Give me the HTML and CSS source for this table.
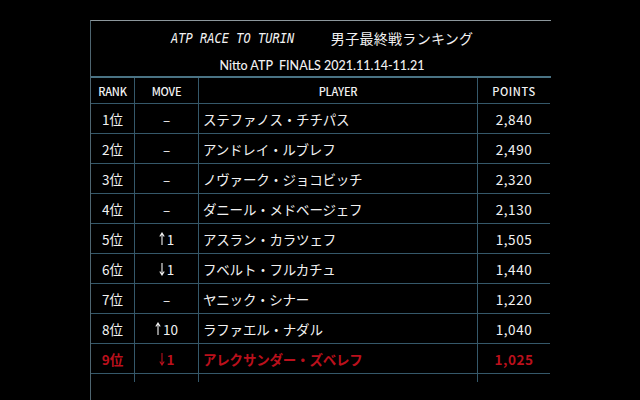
FILE: index.html
```html
<!DOCTYPE html>
<html lang="ja">
<head>
<meta charset="utf-8">
<link rel="stylesheet" href="styles.css">
</head>
<body>
<div class="board">
  <div class="title">
    <span class="title-en">ATP RACE TO TURIN</span>
    <span class="title-ja">男子最終戦ランキング</span>
  </div>
  <div class="subtitle">Nitto ATP&nbsp; FINALS 2021.11.14-11.21</div>
  <div class="table">
    <div class="cell head">RANK</div>
    <div class="cell head">MOVE</div>
    <div class="cell head">PLAYER</div>
    <div class="cell head last">POINTS</div>

    <div class="cell">1位</div><div class="cell">–</div><div class="cell name">ステファノス・チチパス</div><div class="cell last">2,840</div>
    <div class="cell">2位</div><div class="cell">–</div><div class="cell name">アンドレイ・ルブレフ</div><div class="cell last">2,490</div>
    <div class="cell">3位</div><div class="cell">–</div><div class="cell name">ノヴァーク・ジョコビッチ</div><div class="cell last">2,320</div>
    <div class="cell">4位</div><div class="cell">–</div><div class="cell name">ダニール・メドベージェフ</div><div class="cell last">2,130</div>
    <div class="cell">5位</div><div class="cell"><svg class="arrow" viewBox="0 0 6 14"><path d="M3 1V13M0.8 4.5L3 1L5.2 4.5"/></svg>1</div><div class="cell name">アスラン・カラツェフ</div><div class="cell last">1,505</div>
    <div class="cell">6位</div><div class="cell"><svg class="arrow" viewBox="0 0 6 14"><path d="M3 1V13M0.8 9.5L3 13L5.2 9.5"/></svg>1</div><div class="cell name">フベルト・フルカチュ</div><div class="cell last">1,440</div>
    <div class="cell">7位</div><div class="cell">–</div><div class="cell name">ヤニック・シナー</div><div class="cell last">1,220</div>
    <div class="cell">8位</div><div class="cell"><svg class="arrow" viewBox="0 0 6 14"><path d="M3 1V13M0.8 4.5L3 1L5.2 4.5"/></svg>10</div><div class="cell name">ラファエル・ナダル</div><div class="cell last">1,040</div>
    <div class="cell red">9位</div><div class="cell red"><svg class="arrow" viewBox="0 0 6 14"><path d="M3 1V13M0.8 9.5L3 13L5.2 9.5"/></svg>1</div><div class="cell name red">アレクサンダー・ズベレフ</div><div class="cell last red">1,025</div>

    <div class="cell tail"></div><div class="cell tail"></div><div class="cell tail"></div><div class="cell tail last"></div>
  </div>
</div>
</body>
</html>
```

FILE: styles.css
```css
html, body {
  margin: 0;
  padding: 0;
  background: #000;
}
body {
  width: 640px;
  height: 400px;
  overflow: hidden;
  color: #f2f2f2;
  font-family: "Noto Sans CJK JP", "Noto Sans", sans-serif;
}
.board {
  margin: 20px 0 0 90px;
  width: 460px;
  border-top: 1px solid #8c979c;
  border-left: 1px solid #4e6570;
}
.title {
  height: 34px;
  display: flex;
  justify-content: center;
  align-items: center;
  gap: 37px;
  padding-left: 2px;
}
.title-en {
  display: inline-block;
  font-family: "DejaVu Sans Mono", monospace;
  font-style: italic;
  font-size: 14px;
  transform: scaleX(0.86);
  margin: 0 -10px;
}
.title-ja {
  font-size: 14px;
  letter-spacing: 0.3px;
}
.subtitle {
  height: 21px;
  line-height: 21px;
  text-align: center;
  font-family: "Lato", "Open Sans", sans-serif;
  font-size: 12.5px;
  font-weight: 500;
  padding-left: 2px;
}
.table {
  display: grid;
  grid-template-columns: 44px 64px 279px 72px;
  grid-template-rows: 26px;
  grid-auto-rows: 30px;
  border-top: 2px solid #4a7384;
}
.cell {
  border-right: 1px solid #35586a;
  border-bottom: 1px solid #35586a;
  display: flex;
  align-items: center;
  justify-content: center;
  font-size: 13.5px;
  white-space: nowrap;
}
.cell.last {
  border-right: none;
  letter-spacing: 0.6px;
}
.head {
  font-size: 11px;
  font-weight: 500;
  letter-spacing: -0.2px;
}
.name {
  justify-content: flex-start;
  padding-left: 4px;
  letter-spacing: -0.2px;
}
.red {
  color: #bb101c;
  font-weight: 700;
}
.arrow {
  width: 6px;
  height: 14px;
  margin-right: 2px;
  fill: none;
  stroke: currentColor;
  stroke-width: 1.1;
}
.tail {
  border-bottom: none;
  height: 8px;
}
```
